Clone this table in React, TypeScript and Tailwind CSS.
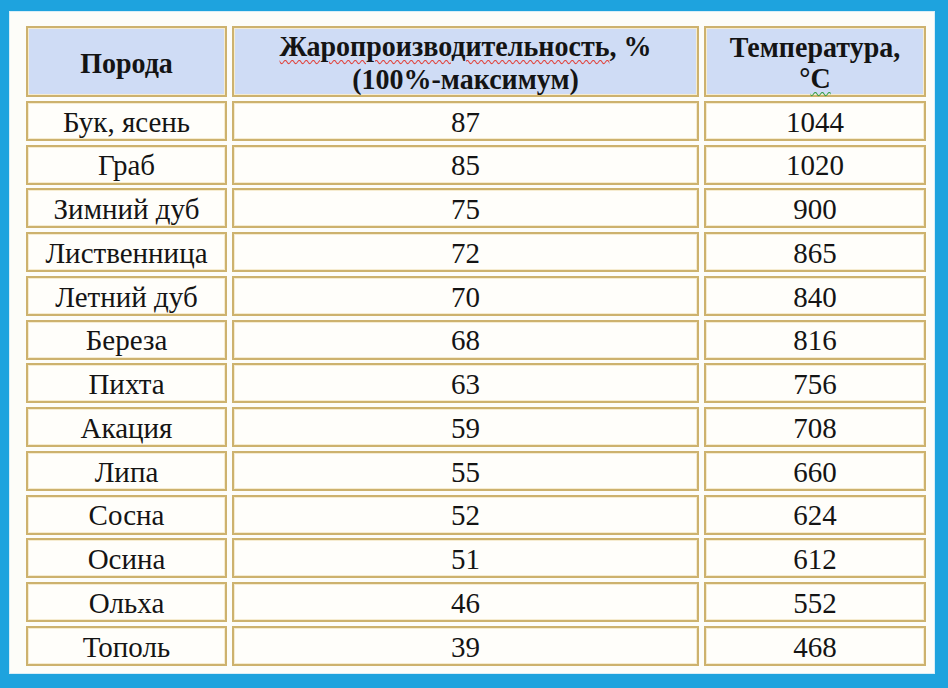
import * as React from "react";

const rows: [string, string, string][] = [
  ["Бук, ясень", "87", "1044"],
  ["Граб", "85", "1020"],
  ["Зимний дуб", "75", "900"],
  ["Лиственница", "72", "865"],
  ["Летний дуб", "70", "840"],
  ["Береза", "68", "816"],
  ["Пихта", "63", "756"],
  ["Акация", "59", "708"],
  ["Липа", "55", "660"],
  ["Сосна", "52", "624"],
  ["Осина", "51", "612"],
  ["Ольха", "46", "552"],
  ["Тополь", "39", "468"],
];

const cell =
  "flex items-center justify-center border-2 border-[#cdb26e] shadow-[inset_0_0_0_1px_#f6ecd0] text-center";

export default function App() {
  return (
    <div
      className="h-[688px] w-[948px] bg-[#1ea3de] pl-[10px] pt-[12px]"
      style={{ fontFamily: '"Liberation Serif", "Times New Roman", serif' }}
    >
      <div className="h-[661px] w-[924px] bg-[#fdfdf9] pl-[16px] pt-[14px] shadow-[0_0_0_1px_#d8eef8]">
        <div className="grid grid-cols-[201px_467px_222px] gap-x-[5px] gap-y-[3.75px] text-[#141414]">
          {/* Header */}
          <div className={`${cell} h-[71px] bg-[#cfdcf5] pt-[4px] text-[28px] font-bold`}>
            <span className="scale-y-[1.05]">Порода</span>
          </div>
          <div
            className={`${cell} h-[71px] flex-col bg-[#cfdcf5] pt-[2px] text-[28px] font-bold leading-[33px]`}
          >
            <span className="scale-y-[1.05]">
              <span className="underline decoration-wavy decoration-[#e0453f] decoration-1 underline-offset-[3px]">
                Жаропроизводительность
              </span>
              , %
            </span>
            <span className="scale-y-[1.05]">(100%-максимум)</span>
          </div>
          <div
            className={`${cell} h-[71px] flex-col bg-[#cfdcf5] pt-[2px] text-[28px] font-bold leading-[31px]`}
          >
            <span className="scale-y-[1.05]">Температура,</span>
            <span className="scale-y-[1.05]">
              °
              <span className="underline decoration-wavy decoration-[#3aa04a] decoration-1 underline-offset-[3px]">
                С
              </span>
            </span>
          </div>

          {/* Body */}
          {rows.map(([name, pct, temp]) => (
            <React.Fragment key={name}>
              <div className={`${cell} h-[40px] bg-[#fffefa] pt-[3px] text-[29px]`}>
                <span className="scale-y-[1.05]">{name}</span>
              </div>
              <div className={`${cell} h-[40px] bg-[#fffefa] pt-[3px] text-[29px]`}>
                <span className="scale-y-[1.05]">{pct}</span>
              </div>
              <div className={`${cell} h-[40px] bg-[#fffefa] pt-[3px] text-[29px]`}>
                <span className="scale-y-[1.05]">{temp}</span>
              </div>
            </React.Fragment>
          ))}
        </div>
      </div>
    </div>
  );
}
